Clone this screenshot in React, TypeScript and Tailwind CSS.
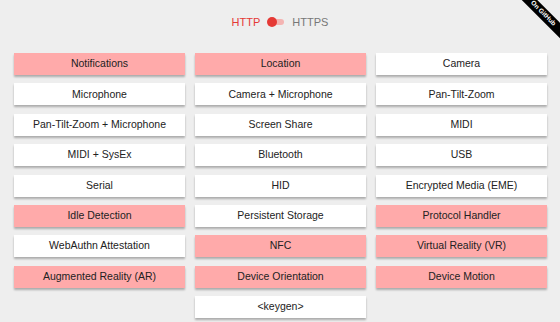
import React from "react";

const items: [string, boolean][] = [
  ["Notifications", true],
  ["Location", true],
  ["Camera", false],
  ["Microphone", false],
  ["Camera + Microphone", false],
  ["Pan-Tilt-Zoom", false],
  ["Pan-Tilt-Zoom + Microphone", false],
  ["Screen Share", false],
  ["MIDI", false],
  ["MIDI + SysEx", false],
  ["Bluetooth", false],
  ["USB", false],
  ["Serial", false],
  ["HID", false],
  ["Encrypted Media (EME)", false],
  ["Idle Detection", true],
  ["Persistent Storage", false],
  ["Protocol Handler", true],
  ["WebAuthn Attestation", false],
  ["NFC", true],
  ["Virtual Reality (VR)", true],
  ["Augmented Reality (AR)", true],
  ["Device Orientation", true],
  ["Device Motion", true],
];

export default function App() {
  return (
    <div
      className="relative w-[560px] h-[322px] bg-[#eeeeee] overflow-hidden"
      style={{ fontFamily: '"Liberation Sans", Arial, sans-serif' }}
    >
      <div className="absolute top-0 right-0 w-[60px] h-[60px] overflow-hidden">
        <div className="absolute left-[3px] top-[7.5px] w-[80px] h-[11px] bg-black rotate-45 flex items-center justify-center text-white text-[6.5px] font-bold leading-none">
          On GitHub
        </div>
      </div>
      <div className="h-[44px] flex items-center justify-center">
        <span className="text-[11px] text-[#e53935] mr-[7px]">HTTP</span>
        <div className="relative w-[17px] h-[10px] flex items-center">
          <div className="w-[16px] h-[6px] ml-[1px] rounded-full bg-[#f4b4b2]" />
          <div className="absolute left-0 top-0 w-[10px] h-[10px] rounded-full bg-[#e53935]" />
        </div>
        <span className="text-[11px] text-[#777777] ml-[8px]">HTTPS</span>
      </div>
      <div className="grid grid-cols-3 gap-x-[10px] gap-y-[8.4px] pl-[14px] pr-[13px] mt-[9px]">
        {items.map(([label, pink]) => (
          <div
            key={label}
            className={`h-[22px] flex items-center justify-center text-[10.5px] text-[#222222] shadow-[0_2px_2px_rgba(0,0,0,0.28)] ${
              pink ? "bg-[#ffaaaa]" : "bg-white"
            }`}
          >
            {label}
          </div>
        ))}
        <div className="col-start-2 h-[22px] flex items-center justify-center text-[10.5px] text-[#222222] bg-white shadow-[0_2px_2px_rgba(0,0,0,0.28)]">
          {"<keygen>"}
        </div>
      </div>
    </div>
  );
}
